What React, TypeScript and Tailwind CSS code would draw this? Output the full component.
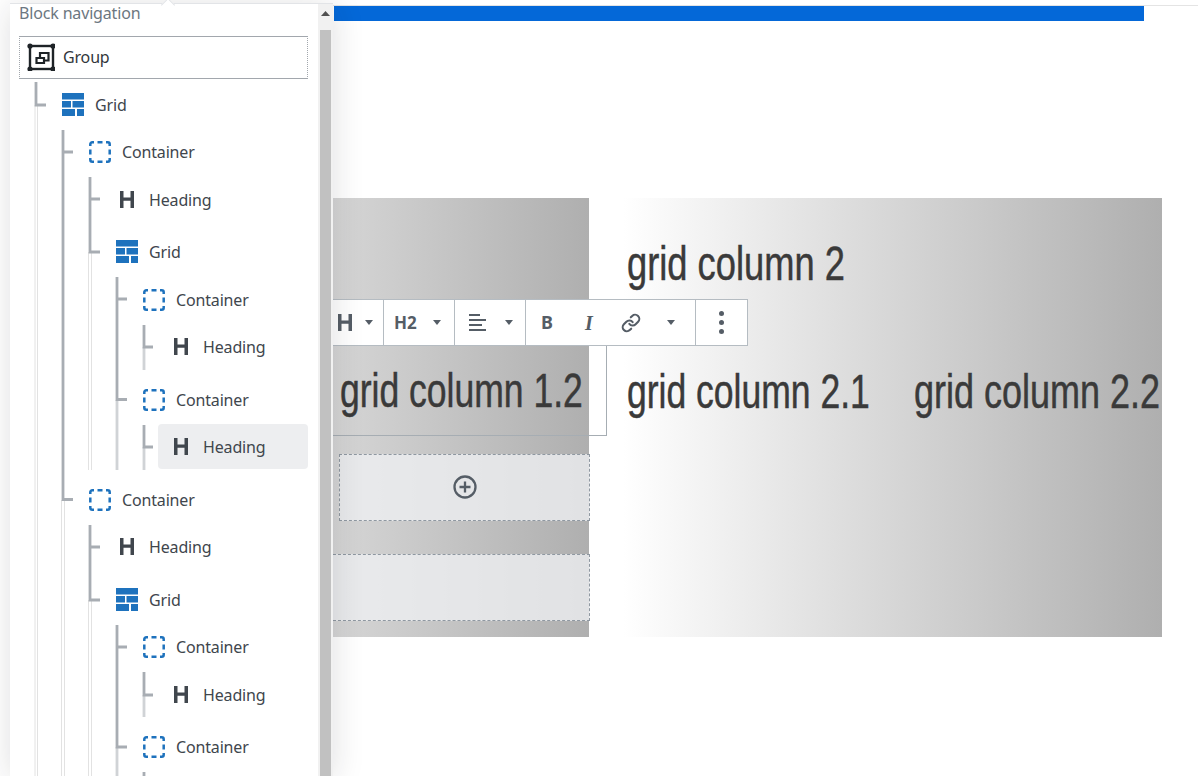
import { Link } from "lucide-react";

const ui = "font-['Noto_Sans',sans-serif]";

const GroupIcon = () => (
    <svg width="28" height="28" viewBox="0 0 28 28" fill="none" className="shrink-0">
        <rect x="3" y="3" width="23" height="23" stroke="#1e2327" strokeWidth="2.4" />
        <circle cx="3" cy="3" r="2.6" fill="#1e2327" />
        <circle cx="26" cy="3" r="2.6" fill="#1e2327" />
        <circle cx="3" cy="26" r="2.6" fill="#1e2327" />
        <circle cx="26" cy="26" r="2.6" fill="#1e2327" />
        <path d="M13 14v-4h8.500v7.500H17" stroke="#1e2327" strokeWidth="2.200" />
        <path d="M9.500 15h7.500v5H9.500z" stroke="#1e2327" strokeWidth="2.200" />
    </svg>
);

const GridIcon = () => (
    <svg width="22" height="23" viewBox="0 0 22 23" fill="#1e72bd" className="shrink-0">
        <rect x="0" y="0" width="22" height="6.5" />
        <rect x="0" y="8" width="9" height="6.5" />
        <rect x="10.5" y="8" width="11.5" height="6.5" />
        <rect x="0" y="16" width="13" height="7" />
        <rect x="15" y="16" width="7" height="7" />
    </svg>
);

const ContainerIcon = () => (
    <svg width="22" height="22" viewBox="0 0 22 22" fill="none" stroke="#1e72bd" strokeWidth="2.500" className="shrink-0">
        <path d="M1.300 5V3.300a2 2 0 0 1 2-2H5" />
        <path d="M17 1.300h1.700a2 2 0 0 1 2 2V5" />
        <path d="M20.700 17v1.700a2 2 0 0 1-2 2H17" />
        <path d="M5 20.700H3.300a2 2 0 0 1-2-2V17" />
        <path d="M8.500 1.300h5M8.500 20.700h5M1.300 8.500v5M20.700 8.500v5" />
    </svg>
);

const HIcon = ({ color = "#40464d" }: { color?: string }) => (
    <svg width="14" height="17" viewBox="0 0 14 17" fill={color} className="shrink-0">
        <path d="M0 0h3.500v6.500h7V0H14v17h-3.500V9.800h-7V17H0z" />
    </svg>
);

const Caret = () => (
    <svg width="8" height="5" viewBox="0 0 8 5" fill="#555d66" className="shrink-0">
        <path d="M0 0h8L4 5z" />
    </svg>
);

type Row = { kind: "grid" | "container" | "heading"; label: string; ml: string; mt: string; selected?: boolean };

const rows: Row[] = [
    { kind: "grid", label: "Grid", ml: "ml-[31px]", mt: "mt-[3px]" },
    { kind: "container", label: "Container", ml: "ml-[58px]", mt: "mt-[2px]" },
    { kind: "heading", label: "Heading", ml: "ml-[85px]", mt: "mt-[3px]" },
    { kind: "grid", label: "Grid", ml: "ml-[85px]", mt: "mt-[7px]" },
    { kind: "container", label: "Container", ml: "ml-[112px]", mt: "mt-[3px]" },
    { kind: "heading", label: "Heading", ml: "ml-[139px]", mt: "mt-[2px]" },
    { kind: "container", label: "Container", ml: "ml-[112px]", mt: "mt-[8px]" },
    { kind: "heading", label: "Heading", ml: "ml-[138px] pl-[11px]", mt: "mt-[2px]", selected: true },
    { kind: "container", label: "Container", ml: "ml-[58px]", mt: "mt-[8px]" },
    { kind: "heading", label: "Heading", ml: "ml-[85px]", mt: "mt-[2px]" },
    { kind: "grid", label: "Grid", ml: "ml-[85px]", mt: "mt-[8px]" },
    { kind: "container", label: "Container", ml: "ml-[112px]", mt: "mt-[2px]" },
    { kind: "heading", label: "Heading", ml: "ml-[139px]", mt: "mt-[3px]" },
    { kind: "container", label: "Container", ml: "ml-[112px]", mt: "mt-[7px]" },
];

// tree connectors, in page coordinates
const TreeLines = () => {
    const dark = "#a8adb3";
    const light = "#d0d3d6";
    const faint = "#e2e2e2";
    return (
        <svg width="333" height="776" className="absolute left-[-10px] top-[-4px] pointer-events-none">
            <g stroke={faint} strokeWidth="1">
                <path d="M35 105V776M37.500 105V776" />
                <path d="M61.500 500V776M64.500 500V776" />
                <path d="M88.500 252V470M91.500 252V470M88.500 600V776M91.500 600V776" />
            </g>
            <g stroke={light} strokeWidth="2.800">
                <path d="M117 400V470M144 347V370M144 447V470M117 747V776M144 695V717" />
            </g>
            <g stroke={dark} strokeWidth="2.800" fill="none">
                <path d="M36 82V105H46" />
                <path d="M63 130V499.500H73M63 152H73" />
                <path d="M90 177V252H100M90 199H100" />
                <path d="M117 277V399.500H127M117 299H127" />
                <path d="M144 325V347H153M144 425V447H153" />
                <path d="M90 525V600H100M90 547H100" />
                <path d="M117 625V747H127M117 647H127" />
                <path d="M144 772V776" />
                <path d="M144 672V695H153" />
            </g>
        </svg>
    );
};

const TreeRow = ({ row }: { row: Row }) => (
    <div
        className={`flex items-center h-[45px] shrink-0 pl-[10px] rounded-[4px] text-[16px] tracking-[-0.01em] text-[#40464d] ${row.ml} ${row.mt} ${row.selected ? "bg-[#edeef0]" : ""}`}
    >
        <div className="w-[24px] flex justify-center shrink-0">
            {row.kind === "grid" && <GridIcon />}
            {row.kind === "container" && <ContainerIcon />}
            {row.kind === "heading" && <HIcon />}
        </div>
        <span className="ml-[10px]">{row.label}</span>
    </div>
);

const BlockNavigation = () => (
    <div className={`relative z-10 ml-[10px] mt-[3px] w-[323px] h-[773px] shrink-0 flex bg-white border-t border-[#e2e4e7] shadow-[0_3px_30px_rgba(25,30,35,0.14)] ${ui}`}>
        <div className="absolute left-[153px] top-[-4px] w-[10px] h-[10px] rotate-45 bg-white border-l border-t border-[#e2e4e7]" />
        <div className="relative flex-1 min-w-0">
            <TreeLines />
            <div className="relative pl-[10px] pr-[10px] flex flex-col">
                <div className="ml-[-1px] h-[18px] text-[16px] leading-[18px] tracking-[-0.01em] text-[#6c7781]">Block navigation</div>
                <div className="mt-[14px] ml-[-1px] h-[43px] flex items-center pl-[7px] pb-[1px] text-[16px] tracking-[-0.01em] text-[#32373c] border border-[#a2a7ad] [border-style:solid_dotted]">
                    <GroupIcon />
                    <span className="ml-[8px]">Group</span>
                </div>
                {rows.map((row, i) => (
                    <TreeRow key={i} row={row} />
                ))}
            </div>
        </div>
        <div className="relative w-[15px] shrink-0 flex flex-col items-center bg-[#f1f1f1]">
            <svg width="9" height="5" viewBox="0 0 9 5" fill="#505050" className="mt-[7px]">
                <path d="M0 5L4.500 0 9 5z" />
            </svg>
            <div className="mt-[14px] w-[11px] flex-1 bg-[#c1c1c1]" />
        </div>
    </div>
);

const Toolbar = () => (
    <div className="absolute left-0 top-[101px] z-[5] h-[47px] flex bg-white border border-l-0 border-[#b5bcc2] text-[#555d66]">
        <div className="w-[51px] flex items-center pl-[5px] gap-[13px] border-r border-[#b5bcc2]">
            <HIcon color="#555d66" />
            <Caret />
        </div>
        <div className="w-[71px] flex items-center pl-[10px] gap-[16px] border-r border-[#b5bcc2]">
            <span className={`w-[23px] text-[17px] font-bold whitespace-nowrap ${ui}`}>H2</span>
            <Caret />
        </div>
        <div className="w-[71px] flex items-center pl-[14px] gap-[19px] border-r border-[#b5bcc2]">
            <svg width="17" height="18" viewBox="0 0 17 18" fill="#555d66" className="shrink-0">
                <rect x="0" y="0" width="11" height="2" />
                <rect x="0" y="5" width="17" height="2" />
                <rect x="0" y="10" width="13" height="2" />
                <rect x="0" y="15" width="17" height="2" />
            </svg>
            <Caret />
        </div>
        <div className="w-[170px] flex items-center border-r border-[#b5bcc2]">
            <span className={`w-[42px] text-center text-[18px] font-bold ${ui}`}>B</span>
            <span className="w-[42px] text-center text-[20px] italic font-bold font-['Liberation_Serif',serif]">I</span>
            <span className="w-[42px] flex justify-center">
                <Link size={20} strokeWidth={2.5} />
            </span>
            <span className="w-[38px] flex justify-center">
                <Caret />
            </span>
        </div>
        <div className="w-[51px] flex flex-col items-center justify-center gap-[4px]">
            <div className="w-[5px] h-[5px] rounded-full bg-[#555d66]" />
            <div className="w-[5px] h-[5px] rounded-full bg-[#555d66]" />
            <div className="w-[5px] h-[5px] rounded-full bg-[#555d66]" />
        </div>
    </div>
);

// no Oswald here, so Liberation Sans squeezed to its width
const GridHeading = ({ text, scale }: { text: string; scale: string }) => (
    <h2 className={`w-fit text-[48px] leading-[60px] text-[#3a3a3a] whitespace-nowrap origin-left font-['Liberation_Sans',sans-serif] [-webkit-text-stroke:0.5px_#3a3a3a] ${scale}`}>
        {text}
    </h2>
);

function App() {
    return (
        <div className="w-[1198px] h-[776px] flex overflow-hidden bg-white">
            <BlockNavigation />
            <div className="flex-1 min-w-0 mt-[5px] border-t border-[#e4e4e4] overflow-hidden">
                <div className="ml-[1px] w-[810px] h-[15px] bg-[#0468d8]" />
                <div className="mt-[177px] flex h-[439px]">
                    <div className="relative w-[256px] shrink-0 bg-linear-to-r from-[#d6d6d6] to-[#afafaf]">
                        <Toolbar />
                        <div className="mt-[148px] w-[274px] h-[90px] pl-[7px] flex items-center border-b border-r border-[#a6adb3]">
                            <GridHeading text="grid column 1.2" scale="scale-x-[0.74]" />
                        </div>
                        <div className="mt-[18px] ml-[6px] mr-[-1px] h-[67px] flex items-center justify-center border border-dashed border-[#8f98a1] bg-[rgba(238,239,241,0.8)]">
                            <svg width="24" height="24" viewBox="0 0 24 24" fill="none" stroke="#555d66" strokeWidth="2.300" className="mb-[2px]">
                                <circle cx="12" cy="12" r="10.500" />
                                <path d="M12 6.500v11M6.500 12h11" />
                            </svg>
                        </div>
                        <div className="mt-[33px] mr-[-1px] h-[67px] border border-l-0 border-dashed border-[#8f98a1] bg-[rgba(238,239,241,0.8)]" />
                    </div>
                    <div className="w-[573px] shrink-0 pl-[38px] bg-linear-to-r from-white from-[6%] to-[#afafaf]">
                        <div className="mt-[36px]">
                            <GridHeading text="grid column 2" scale="scale-x-[0.756]" />
                        </div>
                        <div className="mt-[68px] flex">
                            <div className="w-[287px] shrink-0">
                                <GridHeading text="grid column 2.1" scale="scale-x-[0.74]" />
                            </div>
                            <div className="w-[248px] shrink-0">
                                <GridHeading text="grid column 2.2" scale="scale-x-[0.75]" />
                            </div>
                        </div>
                    </div>
                </div>
            </div>
        </div>
    );
}

export default App;
